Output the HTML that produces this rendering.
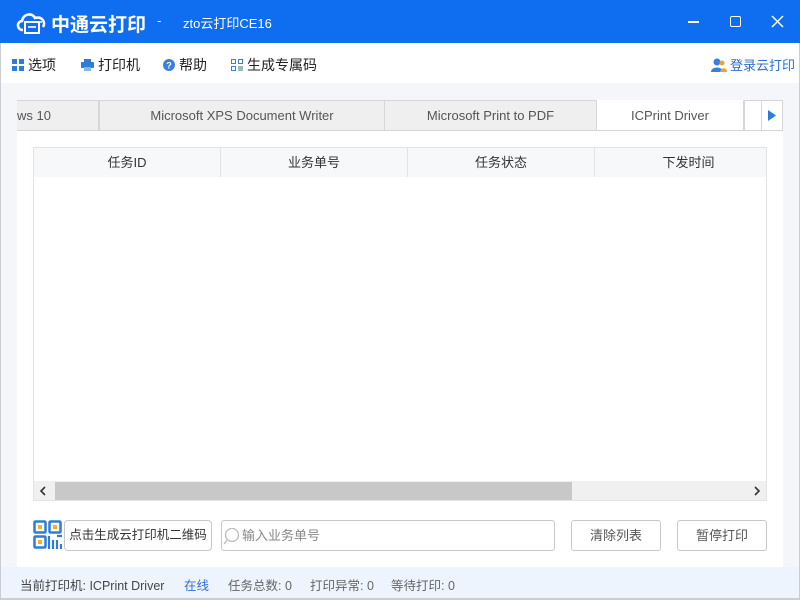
<!DOCTYPE html>
<html><head><meta charset="utf-8"><style>
*{margin:0;padding:0;box-sizing:border-box}
body{width:800px;height:600px;overflow:hidden;font-family:"Liberation Sans","Noto Sans CJK SC",sans-serif;background:#f4f6fa;position:relative;font-size:13px;color:#333}
.ab{position:absolute}
#title{left:0;top:0;width:800px;height:43px;background:#0f6ef0;color:#fff}
#menu{left:0;top:43px;width:800px;height:40px;background:#fff}
.mi{position:absolute;top:12px;font-size:14px;color:#222;display:flex;align-items:center}
.tab{position:absolute;top:100px;height:31px;background:#efefef;border:1px solid #d6d6d6;color:#555;font-size:13px;text-align:center;line-height:29px}
#panel{left:17px;top:131px;width:766px;height:436px;background:#fff}
.th{position:absolute;top:0;height:29px;line-height:29px;text-align:center;font-size:13px;color:#333;border-right:1px solid #e3e3e3}
.btn{position:absolute;top:520px;height:31px;border:1px solid #c8c8c8;border-radius:3px;background:#fff;text-align:center;line-height:29px;font-size:13px;color:#555}
#status{left:0;top:567px;width:800px;height:31px;background:#eef4fd;font-size:12.5px;color:#444}
#status span{position:absolute;top:8px}
</style></head><body>
<div id="title" class="ab">
<svg class="ab" style="left:15px;top:10px" width="34" height="24" viewBox="0 0 34 24"><path d="M8 20 C2 20 1 12 7 11 C8 4 17 2 20 8 C27 6 31 12 28 17" fill="none" stroke="#fff" stroke-width="2.6"/><rect x="10" y="12" width="14" height="11" fill="#0f6ef0" stroke="#fff" stroke-width="2"/><line x1="13" y1="17" x2="21" y2="17" stroke="#fff" stroke-width="1.6"/><circle cx="26" cy="12" r="1" fill="#fff"/><circle cx="29" cy="12" r="1" fill="#fff"/></svg>
<div class="ab" style="left:51px;top:10px;font-size:19px;font-weight:bold;white-space:nowrap">中通云打印</div>
<div class="ab" style="left:157px;top:13px;font-size:13px">-</div>
<div class="ab" style="left:183px;top:13px;font-size:13px">zto云打印CE16</div>
<div class="ab" style="left:688px;top:21px;width:11px;height:1.5px;background:#fff"></div>
<div class="ab" style="left:730px;top:16px;width:11px;height:11px;border:1.5px solid #fff;border-radius:2px"></div>
<svg class="ab" style="left:771px;top:15px" width="13" height="13"><path d="M1 1L12 12M12 1L1 12" stroke="#fff" stroke-width="1.5"/></svg>
</div>
<div id="menu" class="ab">
<div class="mi" style="left:12px"><svg width="12" height="12" style="margin-right:4px"><rect x="0" y="0" width="5" height="5" fill="#2f7bd9"/><rect x="7" y="0" width="5" height="5" fill="#2f7bd9"/><rect x="0" y="7" width="5" height="5" fill="#2f7bd9"/><rect x="7" y="7" width="5" height="5" fill="#2f7bd9"/></svg>选项</div>
<div class="mi" style="left:81px"><svg width="13" height="12" style="margin-right:4px"><rect x="3" y="0" width="7" height="3" fill="#2f7bd9"/><rect x="0" y="3" width="13" height="6" rx="1" fill="#2f7bd9"/><rect x="3" y="8" width="7" height="4" fill="#8ab4ec"/></svg>打印机</div>
<div class="mi" style="left:163px"><svg width="12" height="12" style="margin-right:4px"><circle cx="6" cy="6" r="6" fill="#3a7fe0"/><text x="6" y="9.5" font-size="9" fill="#fff" text-anchor="middle" font-weight="bold">?</text></svg>帮助</div>
<div class="mi" style="left:231px"><svg width="12" height="12" style="margin-right:4px"><rect x="0.5" y="0.5" width="4" height="4" fill="none" stroke="#3a7fe0"/><rect x="7.5" y="0.5" width="4" height="4" fill="none" stroke="#3a7fe0"/><rect x="0.5" y="7.5" width="4" height="4" fill="none" stroke="#3a7fe0"/><rect x="7" y="7" width="5" height="5" fill="#9bb"/></svg>生成专属码</div>
<div class="mi" style="left:711px;top:12px;font-size:13px;color:#2d6fd1"><svg width="16" height="14" style="margin-right:3px"><circle cx="6" cy="4" r="3.5" fill="#3a7fe0"/><path d="M0 14C0 8 12 8 12 14Z" fill="#3a7fe0"/><circle cx="11" cy="5" r="2.5" fill="#f0a030"/><path d="M9 14C10 9 16 9 16 14Z" fill="#f0a030"/></svg>登录云打印</div>
</div>
<div class="tab" style="left:17px;width:82px;text-align:left;border-left:none">ws 10</div>
<div class="tab" style="left:99px;width:286px">Microsoft XPS Document Writer</div>
<div class="tab" style="left:384px;width:213px">Microsoft Print to PDF</div>
<div class="tab" style="left:596px;width:148px;background:#fff;border-top-color:#fff">ICPrint Driver</div>
<div class="tab" style="left:744px;width:18px;background:#fff"></div>
<div class="tab" style="left:761px;width:22px;background:#fff"><svg width="8" height="11" style="margin-top:9px"><path d="M0 0L8 5.5L0 11Z" fill="#2f7bd9"/></svg></div>
<div id="panel" class="ab">
<div class="ab" style="left:16px;top:16px;width:734px;height:354px;border:1px solid #e3e3e3;overflow:hidden">
<div class="ab" style="left:0;top:0;width:734px;height:29px;background:#f7f8fa"></div>
<div class="th" style="left:0;width:187px">任务ID</div>
<div class="th" style="left:187px;width:187px">业务单号</div>
<div class="th" style="left:374px;width:187px">任务状态</div>
<div class="th" style="left:561px;width:187px;border:none">下发时间</div>
<div class="ab" style="left:0;top:333px;width:734px;height:20px;background:#f0f0f0"></div>
<div class="ab" style="left:21px;top:334px;width:517px;height:18px;background:#c8c8c8"></div>
<svg class="ab" style="left:5px;top:338px" width="8" height="10"><path d="M6 1L2 5L6 9" fill="none" stroke="#333" stroke-width="1.6"/></svg>
<svg class="ab" style="left:719px;top:338px" width="8" height="10"><path d="M2 1L6 5L2 9" fill="none" stroke="#333" stroke-width="1.6"/></svg>
</div>
</div>
<svg class="ab" style="left:33px;top:520px" width="29" height="30"><rect x="1.5" y="1.5" width="11" height="11" rx="1" fill="none" stroke="#2f7bd9" stroke-width="2.5"/><rect x="5" y="5" width="4" height="4" fill="#f0b020"/><rect x="16.5" y="1.5" width="11" height="11" rx="1" fill="none" stroke="#2f7bd9" stroke-width="2.5"/><rect x="20" y="5" width="4" height="4" fill="#f0b020"/><rect x="1.5" y="16.5" width="11" height="11" rx="1" fill="none" stroke="#2f7bd9" stroke-width="2.5"/><rect x="5" y="20" width="4" height="4" fill="#f0b020"/><path d="M16 16V29M20 20V29M24 16H29M24 20V29M28 24V29" stroke="#2f7bd9" stroke-width="2.2"/></svg>
<div class="btn" style="left:64px;width:148px;border-radius:4px;color:#333;font-size:12.5px">点击生成云打印机二维码</div>
<div class="btn" style="left:221px;width:334px;text-align:left;padding-left:20px;color:#888"><svg class="ab" style="left:1px;top:6px" width="18" height="18"><circle cx="9" cy="8" r="6.5" fill="none" stroke="#bbb" stroke-width="1.3"/><path d="M4 13L1 17" stroke="#bbb" stroke-width="1.3"/></svg>输入业务单号</div>
<div class="btn" style="left:571px;width:90px">清除列表</div>
<div class="btn" style="left:677px;width:90px">暂停打印</div>
<div id="status" class="ab">
<span style="left:20px">当前打印机: ICPrint Driver</span>
<span style="left:184px;color:#2d6fd1">在线</span>
<span style="left:228px;color:#666">任务总数: 0</span>
<span style="left:310px;color:#666">打印异常: 0</span>
<span style="left:391px;color:#666">等待打印: 0</span>
</div>
<div class="ab" style="left:0;top:598px;width:800px;height:2px;background:#c9ced6"></div>
<div class="ab" style="left:0;top:43px;width:1px;height:557px;background:#c9ced6"></div>
<div class="ab" style="left:799px;top:43px;width:1px;height:557px;background:#c9ced6"></div>
</body></html>
